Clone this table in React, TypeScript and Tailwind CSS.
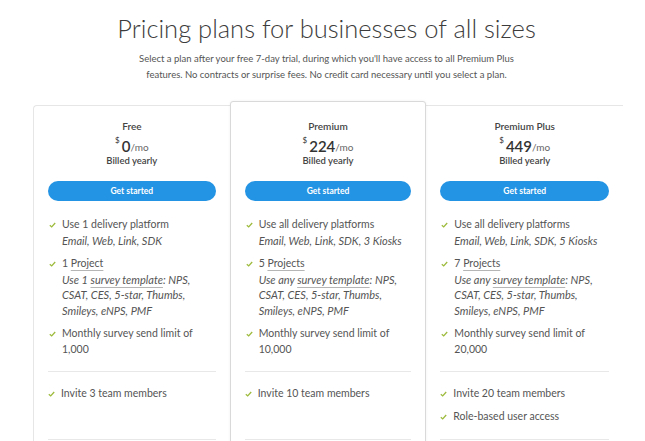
import React from "react";

type Line = { text: string; u?: string };
type Feature = { main: Line; sub: string[]; italic?: boolean; template?: string };

const plans: { name: string; price: string; features: Feature[]; extras: string[] }[] = [
    {
        name: "Free",
        price: "0",
        features: [
            { main: { text: "Use 1 delivery platform" }, sub: ["Email, Web, Link, SDK"], italic: true },
            { main: { text: "1 ", u: "Project" }, sub: [], template: "Use 1 " },
            { main: { text: "Monthly survey send limit of" }, sub: ["1,000"] },
        ],
        extras: ["Invite 3 team members"],
    },
    {
        name: "Premium",
        price: "224",
        features: [
            { main: { text: "Use all delivery platforms" }, sub: ["Email, Web, Link, SDK, 3 Kiosks"], italic: true },
            { main: { text: "5 ", u: "Projects" }, sub: [], template: "Use any " },
            { main: { text: "Monthly survey send limit of" }, sub: ["10,000"] },
        ],
        extras: ["Invite 10 team members"],
    },
    {
        name: "Premium Plus",
        price: "449",
        features: [
            { main: { text: "Use all delivery platforms" }, sub: ["Email, Web, Link, SDK, 5 Kiosks"], italic: true },
            { main: { text: "7 ", u: "Projects" }, sub: [], template: "Use any " },
            { main: { text: "Monthly survey send limit of" }, sub: ["20,000"] },
        ],
        extras: ["Invite 20 team members", "Role-based user access"],
    },
];

const Check = () => (
    <svg width="7" height="6" viewBox="0 0 7 6" className="mt-[5px] shrink-0">
        <path d="M0.8 3.2 L2.7 4.9 L6.2 1" fill="none" stroke="#9dbb3c" strokeWidth="1.3" />
    </svg>
);

const Underlined = ({ children }: { children: React.ReactNode }) => (
    <span className="underline decoration-[#b5b5b5] underline-offset-[3px]">{children}</span>
);

const PlanCard = ({ plan, variant }: { plan: (typeof plans)[number]; variant: "left" | "mid" | "right" }) => {
    const shell =
        variant === "mid"
            ? "border border-[#d9d9d9] rounded-[3px] -mt-[4px] pt-[16px] relative z-10 bg-white shadow-[0_0_3px_rgba(0,0,0,0.06)]"
            : variant === "left"
            ? "border-l border-t border-[#e6e6e6] rounded-tl-[4px] pt-[12px]"
            : "border-t border-[#e6e6e6] pt-[12px]";
    return (
        <div className={`w-[197px] h-[360px] px-[14px] ${shell}`}>
            <div className="flex flex-col items-center">
                <div className="text-[10px] leading-[16px] font-semibold text-[#444]">{plan.name}</div>
                <div className="flex items-start h-[19px] text-[#333]">
                    <span className="text-[8px] leading-[10px] mt-[1px] mr-[2px]">$</span>
                    <span className="text-[15px] leading-[24px] font-semibold">{plan.price}</span>
                    <span className="text-[10px] leading-[26px] text-[#666]">/mo</span>
                </div>
                <div className="text-[9.5px] leading-[16px] font-semibold text-[#444]">Billed yearly</div>
                <button className="mt-[12px] w-full h-[20px] rounded-full bg-[#2393e3] text-white text-[8.5px] font-bold">
                    Get started
                </button>
            </div>
            <div className="mt-[16px] flex flex-col gap-[7.5px] pl-[1px] text-[10.5px] leading-[15.7px] text-[#555]">
                {plan.features.map((f, i) => (
                    <div key={i} className="flex gap-[6px]">
                        <Check />
                        <div>
                            <div>
                                {f.main.text}
                                {f.main.u && <Underlined>{f.main.u}</Underlined>}
                            </div>
                            {f.template ? (
                                <div className="italic text-[11px]">
                                    {f.template}
                                    <Underlined>survey template</Underlined>: NPS,
                                    <br />
                                    CSAT, CES, 5-star, Thumbs,
                                    <br />
                                    Smileys, eNPS, PMF
                                </div>
                            ) : (
                                <div className={f.italic ? "italic text-[11px]" : ""}>{f.sub[0]}</div>
                            )}
                        </div>
                    </div>
                ))}
            </div>
            <div className="mt-[13px] border-t border-[#e8e8e8] h-[68px] pt-[14px] flex flex-col gap-[7.5px] text-[10.5px] leading-[15.7px] text-[#555]">
                {plan.extras.map((e) => (
                    <div key={e} className="flex gap-[6px]">
                        <Check />
                        <div>{e}</div>
                    </div>
                ))}
            </div>
            <div className="border-t border-[#e8e8e8]" />
        </div>
    );
};

export default function App() {
    return (
        <div className="h-[441px] w-[645px] overflow-hidden bg-white font-['Lato','Liberation_Sans',sans-serif]">
            <div className="flex flex-col items-center pt-[11px] pl-[8px]">
                <h1 className="text-[25.5px] leading-[34px] font-light text-[#3c3c3c]">
                    Pricing plans for businesses of all sizes
                </h1>
                <p className="mt-[6px] text-center text-[9.5px] leading-[16px] text-[#555]">
                    Select a plan after your free 7-day trial, during which you'll have access to all Premium Plus
                    <br />
                    features. No contracts or surprise fees. No credit card necessary until you select a plan.
                </p>
            </div>
            <div className="ml-[33px] mt-[22px] flex w-[590px] items-start">
                <PlanCard plan={plans[0]} variant="left" />
                <PlanCard plan={plans[1]} variant="mid" />
                <PlanCard plan={plans[2]} variant="right" />
            </div>
        </div>
    );
}
